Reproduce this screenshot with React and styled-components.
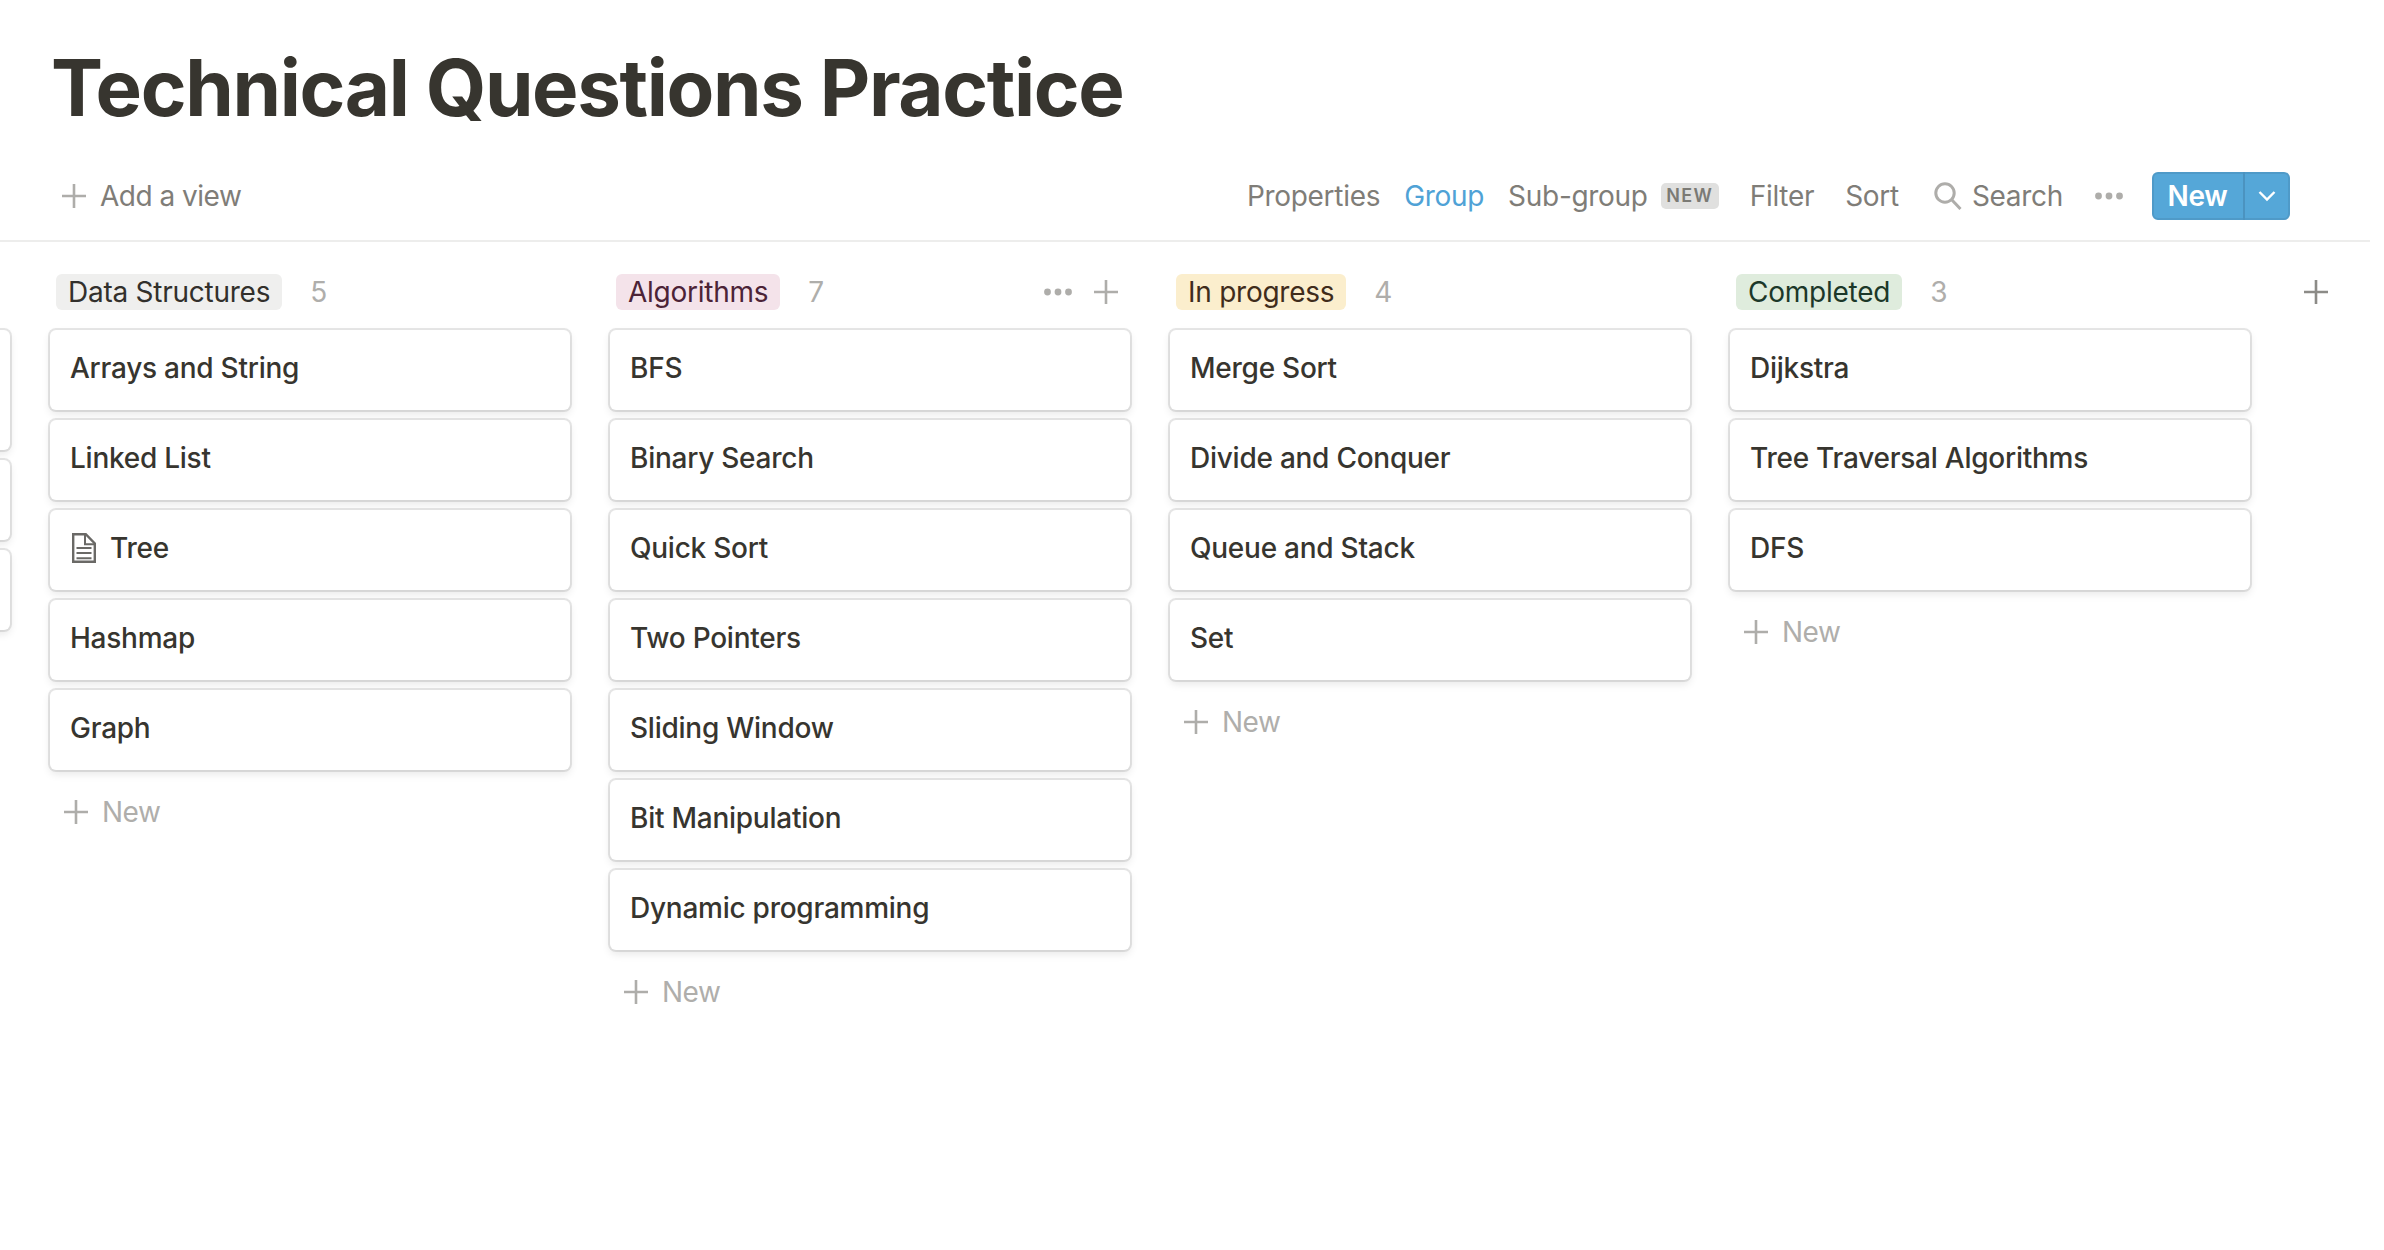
import React from 'react';
import styled, { createGlobalStyle } from 'styled-components';

const Global = createGlobalStyle`
  html, body { margin: 0; padding: 0; background: #fff; overflow: hidden; }
  body { font-family: Inter, "Noto Sans", sans-serif; color: #37352f; letter-spacing: -0.25px; }
  #root { width: 2384px; height: 1250px; overflow: hidden; }
`;

const Page = styled.div`
  width: 2384px;
  height: 1250px;
  overflow: hidden;
  display: flex;
  flex-direction: column;
`;
const Title = styled.h1`
  margin: 0;
  padding: 40px 0 0 51px;
  height: 96px;
  font-size: 78px;
  line-height: 96px;
  font-weight: 700;
  letter-spacing: -1.35px;
  color: #37352f;
  white-space: nowrap;
`;
const Toolbar = styled.div`
  box-sizing: border-box;
  width: 2370px;
  height: 106px;
  padding: 16px 80px 0 62px;
  display: flex;
  align-items: center;
  justify-content: space-between;
  border-bottom: 2px solid #ededec;
`;
const Group = styled.div`
  display: flex;
  align-items: center;
`;
const Item = styled.span`
  display: inline-flex;
  align-items: center;
  font-size: 28px;
  line-height: 40px;
  letter-spacing: ${p => (p.$tight ? '-0.5px' : '-0.3px')};
  color: ${p => (p.$active ? '#4fa2d6' : '#7f7d78')};
  margin-left: ${p => p.$gap || 0}px;
  white-space: nowrap;
`;
const Badge = styled.span`
  box-sizing: border-box;
  margin-left: 13px;
  width: 58px;
  height: 26px;
  border-radius: 5px;
  background: #e0e0df;
  color: #7b7a75;
  font-size: 18px;
  line-height: 26px;
  font-weight: 600;
  letter-spacing: 1.4px;
  text-align: center;
`;
const SplitButton = styled.div`
  margin-left: 29px;
  width: 138px;
  height: 48px;
  box-sizing: border-box;
  display: flex;
  border-radius: 6px;
  background: #55a7d8;
  box-shadow: inset 0 0 0 2px rgba(15, 15, 15, 0.08);
  color: #fff;
`;
const ButtonLabel = styled.span`
  width: 91px;
  text-align: center;
  font-size: 28px;
  line-height: 48px;
  font-weight: 600;
  border-right: 2px solid #4b93c0;
`;
const ButtonArrow = styled.span`
  flex: 1;
  display: flex;
  align-items: center;
  justify-content: center;
  padding-right: 1px;
`;
const Board = styled.div`
  display: flex;
  margin-left: -511px;
  padding-top: 32px;
  align-items: flex-start;
`;
const Column = styled.section`
  flex: none;
  width: 522px;
  margin-right: 38px;
  display: flex;
  flex-direction: column;
`;
const Header = styled.header`
  box-sizing: border-box;
  height: 36px;
  padding: 0 13px 0 7px;
  margin-bottom: 20px;
  display: flex;
  align-items: center;
`;
const Tag = styled.span`
  height: 36px;
  padding: 0 12px;
  border-radius: 6px;
  background: ${p => p.$bg};
  color: ${p => p.$fg};
  font-size: 28px;
  line-height: 36px;
  letter-spacing: -0.25px;
  white-space: nowrap;
`;
const Count = styled.span`
  margin-left: 28px;
  font-size: 28px;
  line-height: 36px;
  color: #afaeab;
`;
const HeaderActions = styled.div`
  margin-left: auto;
  display: flex;
  align-items: center;
  gap: 22px;
`;
const Card = styled.article`
  box-sizing: border-box;
  margin: 0 1px 10px;
  height: ${p => p.$h || 80}px;
  padding: 18px 20px 0;
  border-radius: 6px;
  background: #fff;
  box-shadow: rgba(15, 15, 15, 0.1) 0 0 0 2px, rgba(15, 15, 15, 0.1) 0 4px 8px;
  display: flex;
  align-items: flex-start;
  gap: 14px;
  font-size: 28px;
  line-height: 40px;
  font-weight: 500;
  color: #37352f;
  white-space: nowrap;
`;
const AddRow = styled.div`
  box-sizing: border-box;
  height: 40px;
  margin-top: 12px;
  padding-left: 15px;
  display: flex;
  align-items: center;
  gap: 14px;
  font-size: 28px;
  letter-spacing: -0.5px;
  color: #afaeab;
`;
const Spacer = styled.div`
  height: 36px;
  flex: none;
  width: 24px;
  margin-left: 15px;
  display: flex;
  align-items: center;
`;
const DocGlyph = styled.svg`
  flex: none;
  margin: 5px 0 0 2px;
`;

const Plus = ({ color = '#aeadaa' }) => (
  <svg width="24" height="24" viewBox="0 0 24 24" fill="none" stroke={color} strokeWidth="2.6">
    <path d="M12 0v24M0 12h24" />
  </svg>
);
const Dots = () => (
  <svg width="28" height="8" viewBox="0 0 28 8" fill="#aeadaa">
    <circle cx="3.5" cy="4" r="3.4" /><circle cx="14" cy="4" r="3.4" /><circle cx="24.5" cy="4" r="3.4" />
  </svg>
);
const SearchIcon = () => (
  <svg width="28" height="28" viewBox="0 0 28 28" fill="none" stroke="#aeadaa" strokeWidth="3">
    <circle cx="11" cy="11" r="9.2" />
    <path d="M17.5 17.5L26.5 27" />
  </svg>
);
const Chevron = () => (
  <svg width="18" height="12" viewBox="0 0 18 12" fill="none" stroke="#fff" strokeWidth="2.4">
    <path d="M1.5 2l7.5 7.5L16.5 2" />
  </svg>
);
const DocIcon = () => (
  <DocGlyph width="24" height="30" viewBox="0 0 24 30" fill="none" stroke="#6a6966" strokeWidth="2.4">
    <path d="M1.2 1.2h12.6l9 9.3v18.3H1.2z" />
    <path d="M13 1.2v10h10" strokeWidth="2" />
    <path d="M4.5 15h15M4.5 20h15M4.5 25.2h15" strokeWidth="2" />
  </DocGlyph>
);

const columns = [
  { name: 'Data Structures', bg: '#efefee', fg: '#32302c', cards: ['Arrays and String', 'Linked List', 'Tree', 'Hashmap', 'Graph'] },
  { name: 'Algorithms', bg: '#f4e3ea', fg: '#4c2337', actions: true, cards: ['BFS', 'Binary Search', 'Quick Sort', 'Two Pointers', 'Sliding Window', 'Bit Manipulation', 'Dynamic programming'] },
  { name: 'In progress', bg: '#fbeecd', fg: '#402c1b', cards: ['Merge Sort', 'Divide and Conquer', 'Queue and Stack', 'Set'] },
  { name: 'Completed', bg: '#dfecdd', fg: '#1c3829', cards: ['Dijkstra', 'Tree Traversal Algorithms', 'DFS'] },
];

export default function App() {
  return (
    <Page>
      <Global />
      <Title>Technical Questions Practice</Title>
      <Toolbar>
        <Group>
          <Plus />
          <Item $gap={14} $tight>Add a view</Item>
        </Group>
        <Group>
          <Item>Properties</Item>
          <Item $active $gap={24}>Group</Item>
          <Item $gap={24}>Sub-group</Item>
          <Badge>NEW</Badge>
          <Item $gap={31}>Filter</Item>
          <Item $gap={31}>Sort</Item>
          <Item $gap={35}><SearchIcon /></Item>
          <Item $gap={10}>Search</Item>
          <Item $gap={32}><Dots /></Item>
          <SplitButton>
            <ButtonLabel>New</ButtonLabel>
            <ButtonArrow><Chevron /></ButtonArrow>
          </SplitButton>
        </Group>
      </Toolbar>
      <Board>
        <Column>
          <Header />
          <Card $h={120} />
          <Card />
          <Card />
        </Column>
        {columns.map(c => (
          <Column key={c.name}>
            <Header>
              <Tag $bg={c.bg} $fg={c.fg}>{c.name}</Tag>
              <Count>{c.cards.length}</Count>
              {c.actions && (
                <HeaderActions>
                  <Dots />
                  <Plus />
                </HeaderActions>
              )}
            </Header>
            {c.cards.map(t => (
              <Card key={t}>
                {t === 'Tree' && <DocIcon />}
                {t}
              </Card>
            ))}
            <AddRow><Plus />New</AddRow>
          </Column>
        ))}
        <Spacer><Plus color="#8c8b87" /></Spacer>
      </Board>
    </Page>
  );
}
